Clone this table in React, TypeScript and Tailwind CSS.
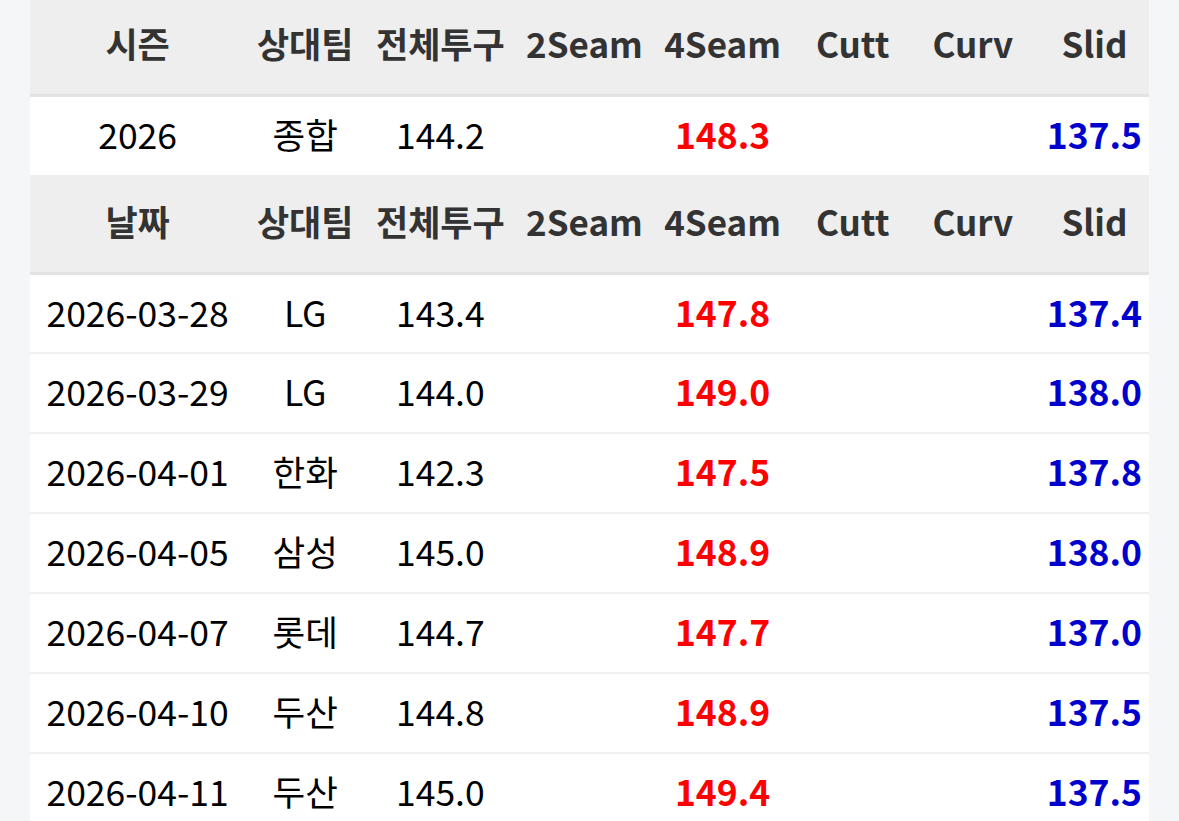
const cols = ["w-[215px]", "w-[120px]", "w-[150px]", "w-[138px]", "w-[138px]", "w-[122px]", "w-[118px]", "w-[117px]"];

const pitchHeads = ["상대팀", "전체투구", "2Seam", "4Seam", "Cutt", "Curv", "Slid"];

const games = [
  { date: "2026-03-28", team: "LG", total: "143.4", four: "147.8", slid: "137.4" },
  { date: "2026-03-29", team: "LG", total: "144.0", four: "149.0", slid: "138.0" },
  { date: "2026-04-01", team: "한화", total: "142.3", four: "147.5", slid: "137.8" },
  { date: "2026-04-05", team: "삼성", total: "145.0", four: "148.9", slid: "138.0" },
  { date: "2026-04-07", team: "롯데", total: "144.7", four: "147.7", slid: "137.0" },
  { date: "2026-04-10", team: "두산", total: "144.8", four: "148.9", slid: "137.5" },
  { date: "2026-04-11", team: "두산", total: "145.0", four: "149.4", slid: "137.5" },
];

function HeadRow({ first }: { first: string }) {
  return (
    <tr className="h-[98px] border-b-[3px] border-[#e3e3e3] bg-[#eeeeee]">
      {[first, ...pitchHeads].map((h) => (
        <th
          key={h}
          className={
            h === "Slid"
              ? "p-0 pb-[4px] pl-[8px] text-center text-[35px] font-bold text-[#333333]"
              : "p-0 pb-[4px] text-center text-[35px] font-bold text-[#333333]"
          }
        >
          {h}
        </th>
      ))}
    </tr>
  );
}

function DataRow({ a, b, c, four, slid, border }: { a: string; b: string; c: string; four: string; slid: string; border: boolean }) {
  return (
    <tr className={border ? "h-[80px] border-b-2 border-[#f0f0f0] bg-white" : "h-[80px] bg-white"}>
      <td className="p-0 pb-[4px] text-center">{a}</td>
      <td className="p-0 pb-[4px] text-center">{b}</td>
      <td className="p-0 pb-[4px] text-center">{c}</td>
      <td className="p-0 pb-[4px] text-center"></td>
      <td className="p-0 pb-[4px] text-center font-bold text-[#ff0000]">{four}</td>
      <td className="p-0 pb-[4px] text-center"></td>
      <td className="p-0 pb-[4px] text-center"></td>
      <td className="p-0 pb-[4px] pl-[8px] text-center font-bold text-[#0000cc]">{slid}</td>
    </tr>
  );
}

export default function App() {
  return (
    <div className="h-[821px] overflow-hidden bg-[#f5f6f8] px-[30px] font-['Noto_Sans_CJK_KR','Noto_Sans',sans-serif] text-[35.5px] text-black">
      <table className="-mt-[3px] w-[1119px] table-fixed border-collapse">
        <colgroup>
          {cols.map((w, i) => (
            <col key={i} className={w} />
          ))}
        </colgroup>
        <tbody>
          <HeadRow first="시즌" />
          <DataRow a="2026" b="종합" c="144.2" four="148.3" slid="137.5" border={false} />
          <HeadRow first="날짜" />
          {games.map((g) => (
            <DataRow key={g.date} a={g.date} b={g.team} c={g.total} four={g.four} slid={g.slid} border />
          ))}
        </tbody>
      </table>
    </div>
  );
}
